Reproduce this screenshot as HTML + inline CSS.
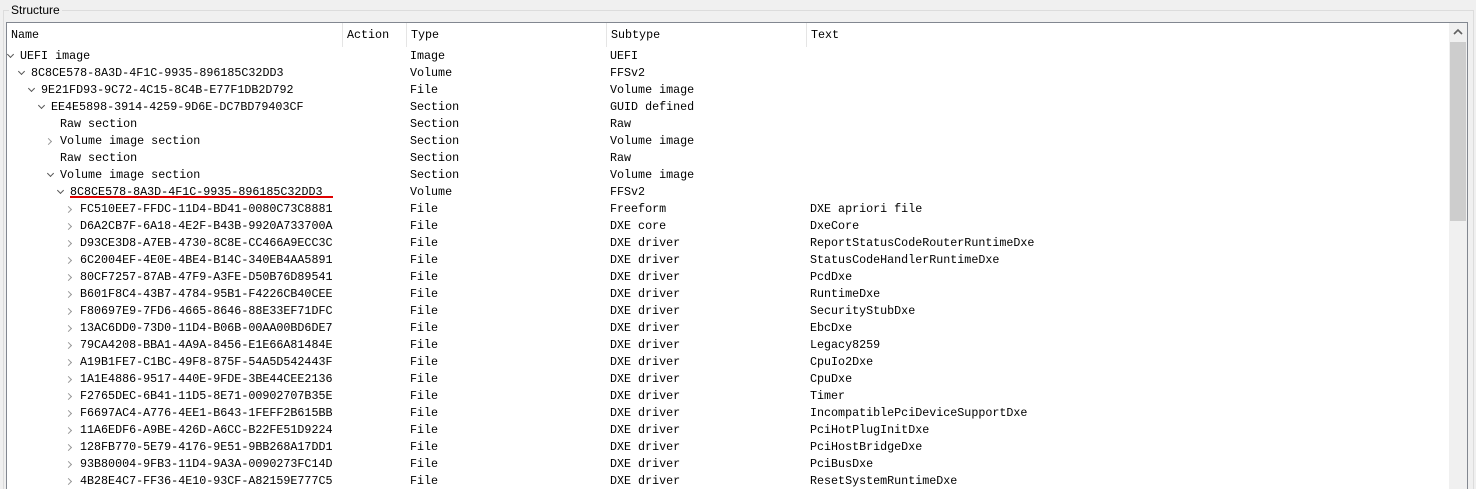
<!DOCTYPE html>
<html style="width:1476px;height:489px;overflow:hidden"><head><meta charset="utf-8"><style>
*{margin:0;padding:0;box-sizing:border-box}
body{width:1476px;height:489px;overflow:hidden;background:#f0f0f0;position:relative;font-family:"Liberation Mono",monospace;font-size:11.7px;color:#000}
.gb{position:absolute;left:3px;top:10px;width:1471px;height:479px;border:1px solid #dcdcdc;border-bottom:none}
.gt{position:absolute;left:9px;top:3px;background:#f0f0f0;padding:0 2px;font-family:"Liberation Sans",sans-serif;font-size:12px}
.tree{position:absolute;left:6px;top:22px;width:1462px;height:467px;background:#fff;border:1px solid #828790;border-bottom:none;overflow:hidden}
.hd{position:absolute;top:0;height:24px;line-height:24px;padding-left:4px}
.sep{position:absolute;top:0;height:24px;width:1px;background:#e5e5e5}
.r{position:absolute;height:17px;line-height:17px;white-space:pre}
.a{position:absolute;width:5px;height:5px;border-right:1.6px solid #555;border-bottom:1.6px solid #555}
.d{transform:rotate(45deg)}
.c{transform:rotate(-45deg);border-color:#999}
.sb{position:absolute;left:1442px;top:0;width:18px;height:467px;background:#f0f0f0}
.th{position:absolute;left:1px;top:19px;width:16px;height:179px;background:#cdcdcd}
</style></head><body>
<div class="gb"></div><div class="gt">Structure</div>
<div class="tree">
<div class="hd" style="left:0">Name</div>
<div class="sep" style="left:335px"></div>
<div class="hd" style="left:336px">Action</div>
<div class="sep" style="left:399px"></div>
<div class="hd" style="left:400px">Type</div>
<div class="sep" style="left:599px"></div>
<div class="hd" style="left:600px">Subtype</div>
<div class="sep" style="left:799px"></div>
<div class="hd" style="left:800px">Text</div>
<div class="sb"><svg width="18" height="18" style="position:absolute;top:0;left:0"><path d="M5 11 L9 7 L13 11" stroke="#606060" stroke-width="1.6" fill="none"/></svg><div class="th"></div></div>
<div id="rows"></div>
</div>
<div style="position:absolute;left:70px;top:196px;width:263px;height:2px;background:#e00000"></div>
<script>
var R=[
[0,'d','UEFI image','Image','UEFI',''],
[1,'d','8C8CE578-8A3D-4F1C-9935-896185C32DD3','Volume','FFSv2',''],
[2,'d','9E21FD93-9C72-4C15-8C4B-E77F1DB2D792','File','Volume image',''],
[3,'d','EE4E5898-3914-4259-9D6E-DC7BD79403CF','Section','GUID defined',''],
[4,'','Raw section','Section','Raw',''],
[4,'c','Volume image section','Section','Volume image',''],
[4,'','Raw section','Section','Raw',''],
[4,'d','Volume image section','Section','Volume image',''],
[5,'d','8C8CE578-8A3D-4F1C-9935-896185C32DD3','Volume','FFSv2',''],
[6,'c','FC510EE7-FFDC-11D4-BD41-0080C73C8881','File','Freeform','DXE apriori file'],
[6,'c','D6A2CB7F-6A18-4E2F-B43B-9920A733700A','File','DXE core','DxeCore'],
[6,'c','D93CE3D8-A7EB-4730-8C8E-CC466A9ECC3C','File','DXE driver','ReportStatusCodeRouterRuntimeDxe'],
[6,'c','6C2004EF-4E0E-4BE4-B14C-340EB4AA5891','File','DXE driver','StatusCodeHandlerRuntimeDxe'],
[6,'c','80CF7257-87AB-47F9-A3FE-D50B76D89541','File','DXE driver','PcdDxe'],
[6,'c','B601F8C4-43B7-4784-95B1-F4226CB40CEE','File','DXE driver','RuntimeDxe'],
[6,'c','F80697E9-7FD6-4665-8646-88E33EF71DFC','File','DXE driver','SecurityStubDxe'],
[6,'c','13AC6DD0-73D0-11D4-B06B-00AA00BD6DE7','File','DXE driver','EbcDxe'],
[6,'c','79CA4208-BBA1-4A9A-8456-E1E66A81484E','File','DXE driver','Legacy8259'],
[6,'c','A19B1FE7-C1BC-49F8-875F-54A5D542443F','File','DXE driver','CpuIo2Dxe'],
[6,'c','1A1E4886-9517-440E-9FDE-3BE44CEE2136','File','DXE driver','CpuDxe'],
[6,'c','F2765DEC-6B41-11D5-8E71-00902707B35E','File','DXE driver','Timer'],
[6,'c','F6697AC4-A776-4EE1-B643-1FEFF2B615BB','File','DXE driver','IncompatiblePciDeviceSupportDxe'],
[6,'c','11A6EDF6-A9BE-426D-A6CC-B22FE51D9224','File','DXE driver','PciHotPlugInitDxe'],
[6,'c','128FB770-5E79-4176-9E51-9BB268A17DD1','File','DXE driver','PciHostBridgeDxe'],
[6,'c','93B80004-9FB3-11D4-9A3A-0090273FC14D','File','DXE driver','PciBusDxe'],
[6,'c','4B28E4C7-FF36-4E10-93CF-A82159E777C5','File','DXE driver','ResetSystemRuntimeDxe']];
var tx=[13,24,34,44,53,63,73],h='';
R.forEach(function(r,i){var t=25+17*i,x=tx[r[0]];
if(r[1]=='d')h+='<div class="a d" style="left:'+(x-12)+'px;top:'+(t+4)+'px"></div>';
if(r[1]=='c')h+='<div class="a c" style="left:'+(x-14)+'px;top:'+(t+6)+'px"></div>';
h+='<div class="r" style="left:'+x+'px;top:'+t+'px">'+r[2]+'</div><div class="r" style="left:403px;top:'+t+'px">'+r[3]+'</div><div class="r" style="left:603px;top:'+t+'px">'+r[4]+'</div><div class="r" style="left:803px;top:'+t+'px">'+r[5]+'</div>';});
document.getElementById('rows').innerHTML=h;
</script>
</body></html>
